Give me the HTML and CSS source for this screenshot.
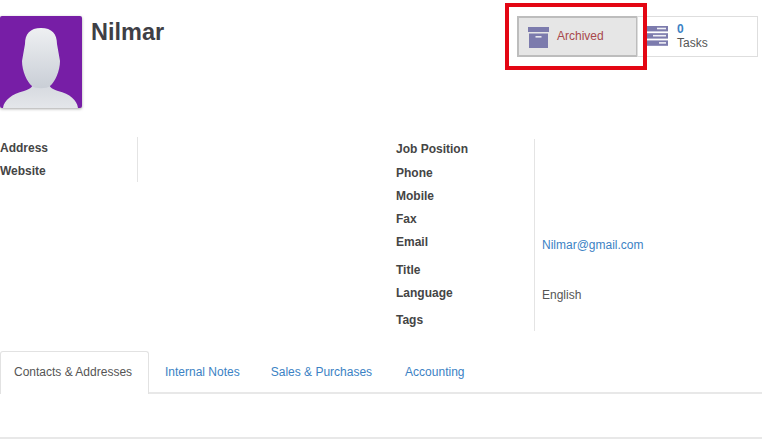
FILE: index.html
```html
<!DOCTYPE html>
<html lang="en">
<head>
<meta charset="utf-8">
<title>Nilmar</title>
<link rel="stylesheet" href="styles.css">
</head>
<body>
<div class="sheet">
  <header class="head">
    <div class="avatar">
      <svg viewBox="0 0 82 92" width="82" height="92">
        <defs>
          <linearGradient id="g" x1="0" y1="0" x2="0" y2="1">
            <stop offset="0" stop-color="#eef0f2"/>
            <stop offset="1" stop-color="#c9ced6"/>
          </linearGradient>
          <linearGradient id="s" x1="0" y1="0" x2="0" y2="1">
            <stop offset="0" stop-color="#d4d8de"/>
            <stop offset="1" stop-color="#e4e6ea"/>
          </linearGradient>
        </defs>
        <path fill="url(#s)" d="M3 92C4 84 12 78 24 75C30 73 32 72 34 66L48 66C50 72 52 73 58 75C70 78 77 84 78 92Z"/>
        <path fill="url(#g)" d="M41 12C30 12 25 18 25 28L22 45C22 55 27 66 32 70C35 73 47 73 50 70C55 66 60 55 60 45L57 28C57 18 52 12 41 12Z"/>
      </svg>
    </div>
    <h1 class="name">Nilmar</h1>
    <div class="stats">
      <div class="stat stat-on">
        <svg class="ic-box" viewBox="0 0 21 21" width="21" height="21">
          <rect x="0" y="0" width="21" height="5" fill="#7c7bad"/>
          <path d="M1 6.5H20V21H1Z" fill="#7c7bad"/>
          <rect x="7.5" y="9" width="6" height="1.6" fill="#e8e8f0"/>
        </svg>
        <span class="archived">Archived</span>
      </div>
      <div class="stat">
        <svg class="ic-tasks" viewBox="0 0 21 20" width="21" height="20">
          <rect x="0" y="0" width="21" height="5.4" fill="#7c7bad"/>
          <rect x="0" y="7.2" width="21" height="5.4" fill="#7c7bad"/>
          <rect x="0" y="14.4" width="21" height="5.4" fill="#7c7bad"/>
          <rect x="10" y="1.7" width="9" height="1.6" fill="#f0f0f6"/>
          <rect x="6" y="8.9" width="13" height="1.6" fill="#f0f0f6"/>
          <rect x="12" y="16.1" width="7" height="1.6" fill="#f0f0f6"/>
        </svg>
        <div class="stat-text"><b>0</b><span>Tasks</span></div>
      </div>
      <div class="mark"></div>
    </div>
  </header>

  <section class="groups">
    <div class="group group-left">
      <div class="labels">
        <div class="lab r-a">Address</div>
        <div class="lab r-b">Website</div>
      </div>
      <div class="values"></div>
    </div>
    <div class="group group-right">
      <div class="labels">
        <div class="lab r1">Job Position</div>
        <div class="lab r2">Phone</div>
        <div class="lab r3">Mobile</div>
        <div class="lab r4">Fax</div>
        <div class="lab r5">Email</div>
        <div class="lab r6">Title</div>
        <div class="lab r7">Language</div>
        <div class="lab r8">Tags</div>
      </div>
      <div class="values">
        <a class="email">Nilmar@gmail.com</a>
        <span class="lang">English</span>
      </div>
    </div>
  </section>

  <nav class="tabs">
    <a class="tab tab-on">Contacts &amp; Addresses</a>
    <a class="tab">Internal Notes</a>
    <a class="tab tab-sales">Sales &amp; Purchases</a>
    <a class="tab">Accounting</a>
  </nav>
  <div class="pane"></div>
</div>
</body>
</html>
```
FILE: styles.css
```css
* { box-sizing: border-box; }
html, body { margin: 0; height: 100%; background: #fff; overflow: hidden; }
body { font-family: "Liberation Sans", Arial, sans-serif; font-size: 12px; color: #4c4c4c; }
.sheet { width: 762px; height: 440px; }

.head { display: flex; align-items: flex-start; padding: 16px 4px 0 0; height: 137px; }
.avatar { width: 82px; height: 92px; background: #771ea6; border-radius: 2px; box-shadow: 0 1px 3px rgba(0,0,0,.35); overflow: hidden; flex: none; }
.avatar svg { display: block; }
.name { margin: 0 0 0 9px; font-size: 23.5px; line-height: 32px; font-weight: 700; color: #3f3f46; }

.stats { margin-left: auto; display: flex; position: relative; }
.stat { width: 121px; height: 41px; border: 1px solid #dedede; display: flex; align-items: center; margin-left: -1px; }
.stat-on { width: 121px; background: #e6e6e6; border: 2px solid #bdbdbd; padding-left: 9px; }
.stat-on .ic-box { margin-right: 8px; margin-top: 1px; }
.archived { color: #a8484c; font-size: 12px; margin-top: -2px; }
.ic-tasks { margin-left: 9px; margin-right: 9px; margin-top: -2px; }
.stat-text { display: flex; flex-direction: column; line-height: 14px; margin-top: -2px; }
.stat-text b { color: #3b82c4; font-size: 12px; }
.stat-text span { color: #555; font-size: 12px; }
.mark { position: absolute; left: -13px; top: -13px; width: 142px; height: 67px; border: 4px solid #e30613; }

.groups { display: flex; height: 214px; }
.group { display: flex; align-items: flex-start; }
.lab { font-weight: 700; font-size: 12px; line-height: 14px; color: #454545; }
.group-left { width: 396px; }
.group-left .labels { width: 138px; height: 45px; border-right: 1px solid #e4e4e4; padding-top: 4px; }
.r-b { margin-top: 9px; }
.group-right { margin-top: 2px; }
.group-right .labels { width: 139px; height: 192px; border-right: 1px solid #e4e4e4; padding-top: 3px; }
.r2 { margin-top: 10px; }
.r3 { margin-top: 9px; }
.r4 { margin-top: 9px; }
.r5 { margin-top: 9px; }
.r6 { margin-top: 14px; }
.r7 { margin-top: 9px; }
.r8 { margin-top: 13px; }
.values { display: flex; flex-direction: column; padding: 98px 0 0 8px; }
.group-right .values { padding-top: 99px; padding-left: 7px; }
.email { color: #3b82c4; line-height: 14px; }
.lang { margin-top: 36px; line-height: 14px; color: #555; }

.tabs { display: flex; height: 43px; border-bottom: 2px solid #e8e8e8; }
.tab { height: 43px; padding: 0 16px; line-height: 42px; color: #3b82c4; font-size: 12px; }
.tab-sales { padding: 0 17px 0 15px; }
.tab-on { width: 149px; padding: 0 13px; color: #555; background: #fff; border: 1px solid #e2e2e2; border-bottom: 0; border-radius: 3px 3px 0 0; line-height: 41px; white-space: nowrap; }
.pane { margin-top: 43px; border-top: 2px solid #e8e8e8; }
```
